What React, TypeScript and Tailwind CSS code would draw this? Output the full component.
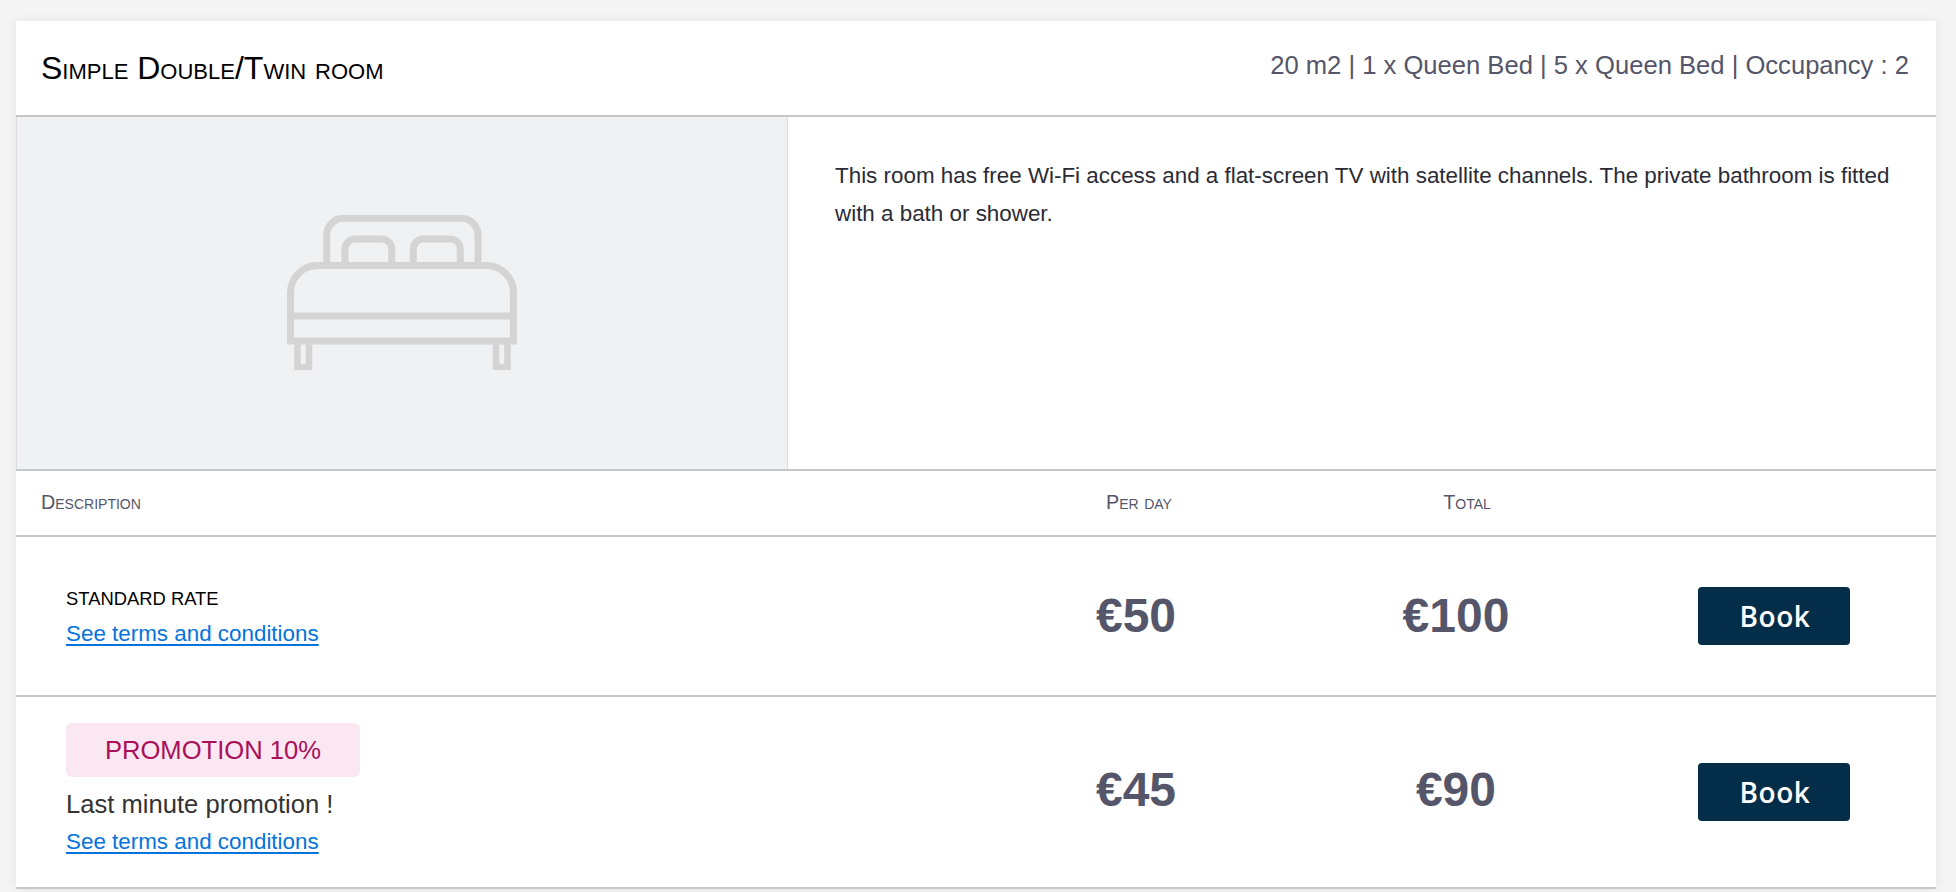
const sans = "font-['Liberation_Sans',Arial,sans-serif]";

function BedIcon() {
  return (
    <svg width="230" height="155" viewBox="0 0 230 155" fill="none" stroke="#d4d4d4" strokeWidth="7">
      <path d="M39.7 48V20A16.7 16.7 0 0 1 56.4 3.3H174.3A16.7 16.7 0 0 1 191 20V48" />
      <path d="M58 48V34A10 10 0 0 1 68 24H94.7A10 10 0 0 1 104.7 34V48" />
      <path d="M126.3 48V34A10 10 0 0 1 136.3 24H163.3A10 10 0 0 1 173.3 34V48" />
      <path d="M3.5 126V77.5A27 27 0 0 1 30.5 50.5H199.5A27 27 0 0 1 226.5 77.5V126" />
      <path d="M3 101H227M0 126H230" />
      <path strokeWidth="6.5" d="M10.5 129V152H22V129M209 129V152H220.5V129" />
    </svg>
  );
}

function Price({ value, className = "" }: { value: string; className?: string }) {
  return <div className={`w-1/6 text-center text-[48px] leading-none font-bold text-[#55566a] ${className}`}>{value}</div>;
}

function BookCell() {
  return (
    <div className="w-1/6 flex justify-center pr-[4px]">
      <button className="w-[152px] h-[58px] pl-[2px] rounded-[4px] bg-[#042d4a] text-white text-[28px] font-semibold font-['Open_Sans',sans-serif] tracking-[0.5px]">
        Book
      </button>
    </div>
  );
}

function Terms() {
  return (
    <a className="block text-[#0474db] text-[22.4px] leading-[30px] underline underline-offset-[3px]" href="#">
      See terms and conditions
    </a>
  );
}

export default function App() {
  return (
    <div className={`h-screen overflow-hidden bg-[#f5f5f5] pl-4 pr-5 pt-[21px] ${sans}`}>
      <div className="bg-white shadow-[0_0_12px_rgba(0,0,0,0.08)]">
        <div className="h-[96px] border-b-2 border-[#c6c6cd] flex justify-between pl-[25px] pr-[27px]">
          <h2 className="text-[32px] leading-none pt-[31px] text-black [font-variant:small-caps]">Simple Double/Twin room</h2>
          <div className="text-[25.6px] leading-none pt-[32px] text-[#55566a]">20 m2 | 1 x Queen Bed | 5 x Queen Bed | Occupancy : 2</div>
        </div>
        <div className="h-[354px] border-b-2 border-[#c6c6cd] flex">
          <div className="w-[772px] bg-[#f0f1f3] border-x border-x-[#dcdce0] flex items-center justify-center pb-[2px]">
            <BedIcon />
          </div>
          <p className="flex-1 pl-[47px] pr-[40px] pt-[40px] text-[22.4px] leading-[38px] text-[#2b2b35]">
            This room has free Wi-Fi access and a flat-screen TV with satellite channels. The private bathroom is fitted with a bath or shower.
          </p>
        </div>
        <div className="h-[66px] border-b-2 border-[#c6c6cd] flex items-center text-[19.8px] text-[#55566a] [font-variant:small-caps]">
          <div className="w-1/2 pl-[25px]">Description</div>
          <div className="w-1/6 text-center pl-[6px]">Per day</div>
          <div className="w-1/6 text-center pl-[22px]">Total</div>
        </div>
        <div className="h-[160px] border-b-2 border-[#c6c6cd] flex items-center">
          <div className="w-1/2 pl-[50px] pt-[2px]">
            <div className="text-[18.4px] leading-[26px] mb-[7px] text-black uppercase">Standard rate</div>
            <Terms />
          </div>
          <Price value="€50" />
          <Price value="€100" />
          <BookCell />
        </div>
        <div className="h-[192px] border-b-2 border-[#c6c6cd] flex items-center">
          <div className="w-1/2 pl-[50px] pb-[5px]">
            <div className="w-[294px] h-[54px] pt-[1px] rounded-[6px] bg-[#fbe7f2] flex items-center justify-center text-[25.6px] text-[#a8115a] uppercase">
              Promotion 10%
            </div>
            <div className="text-[25.6px] leading-[34px] mt-[10px] mb-[6px] text-[#333]">Last minute promotion !</div>
            <Terms />
          </div>
          <Price value="€45" className="pb-[5px]" />
          <Price value="€90" className="pb-[5px]" />
          <BookCell />
        </div>
      </div>
    </div>
  );
}
